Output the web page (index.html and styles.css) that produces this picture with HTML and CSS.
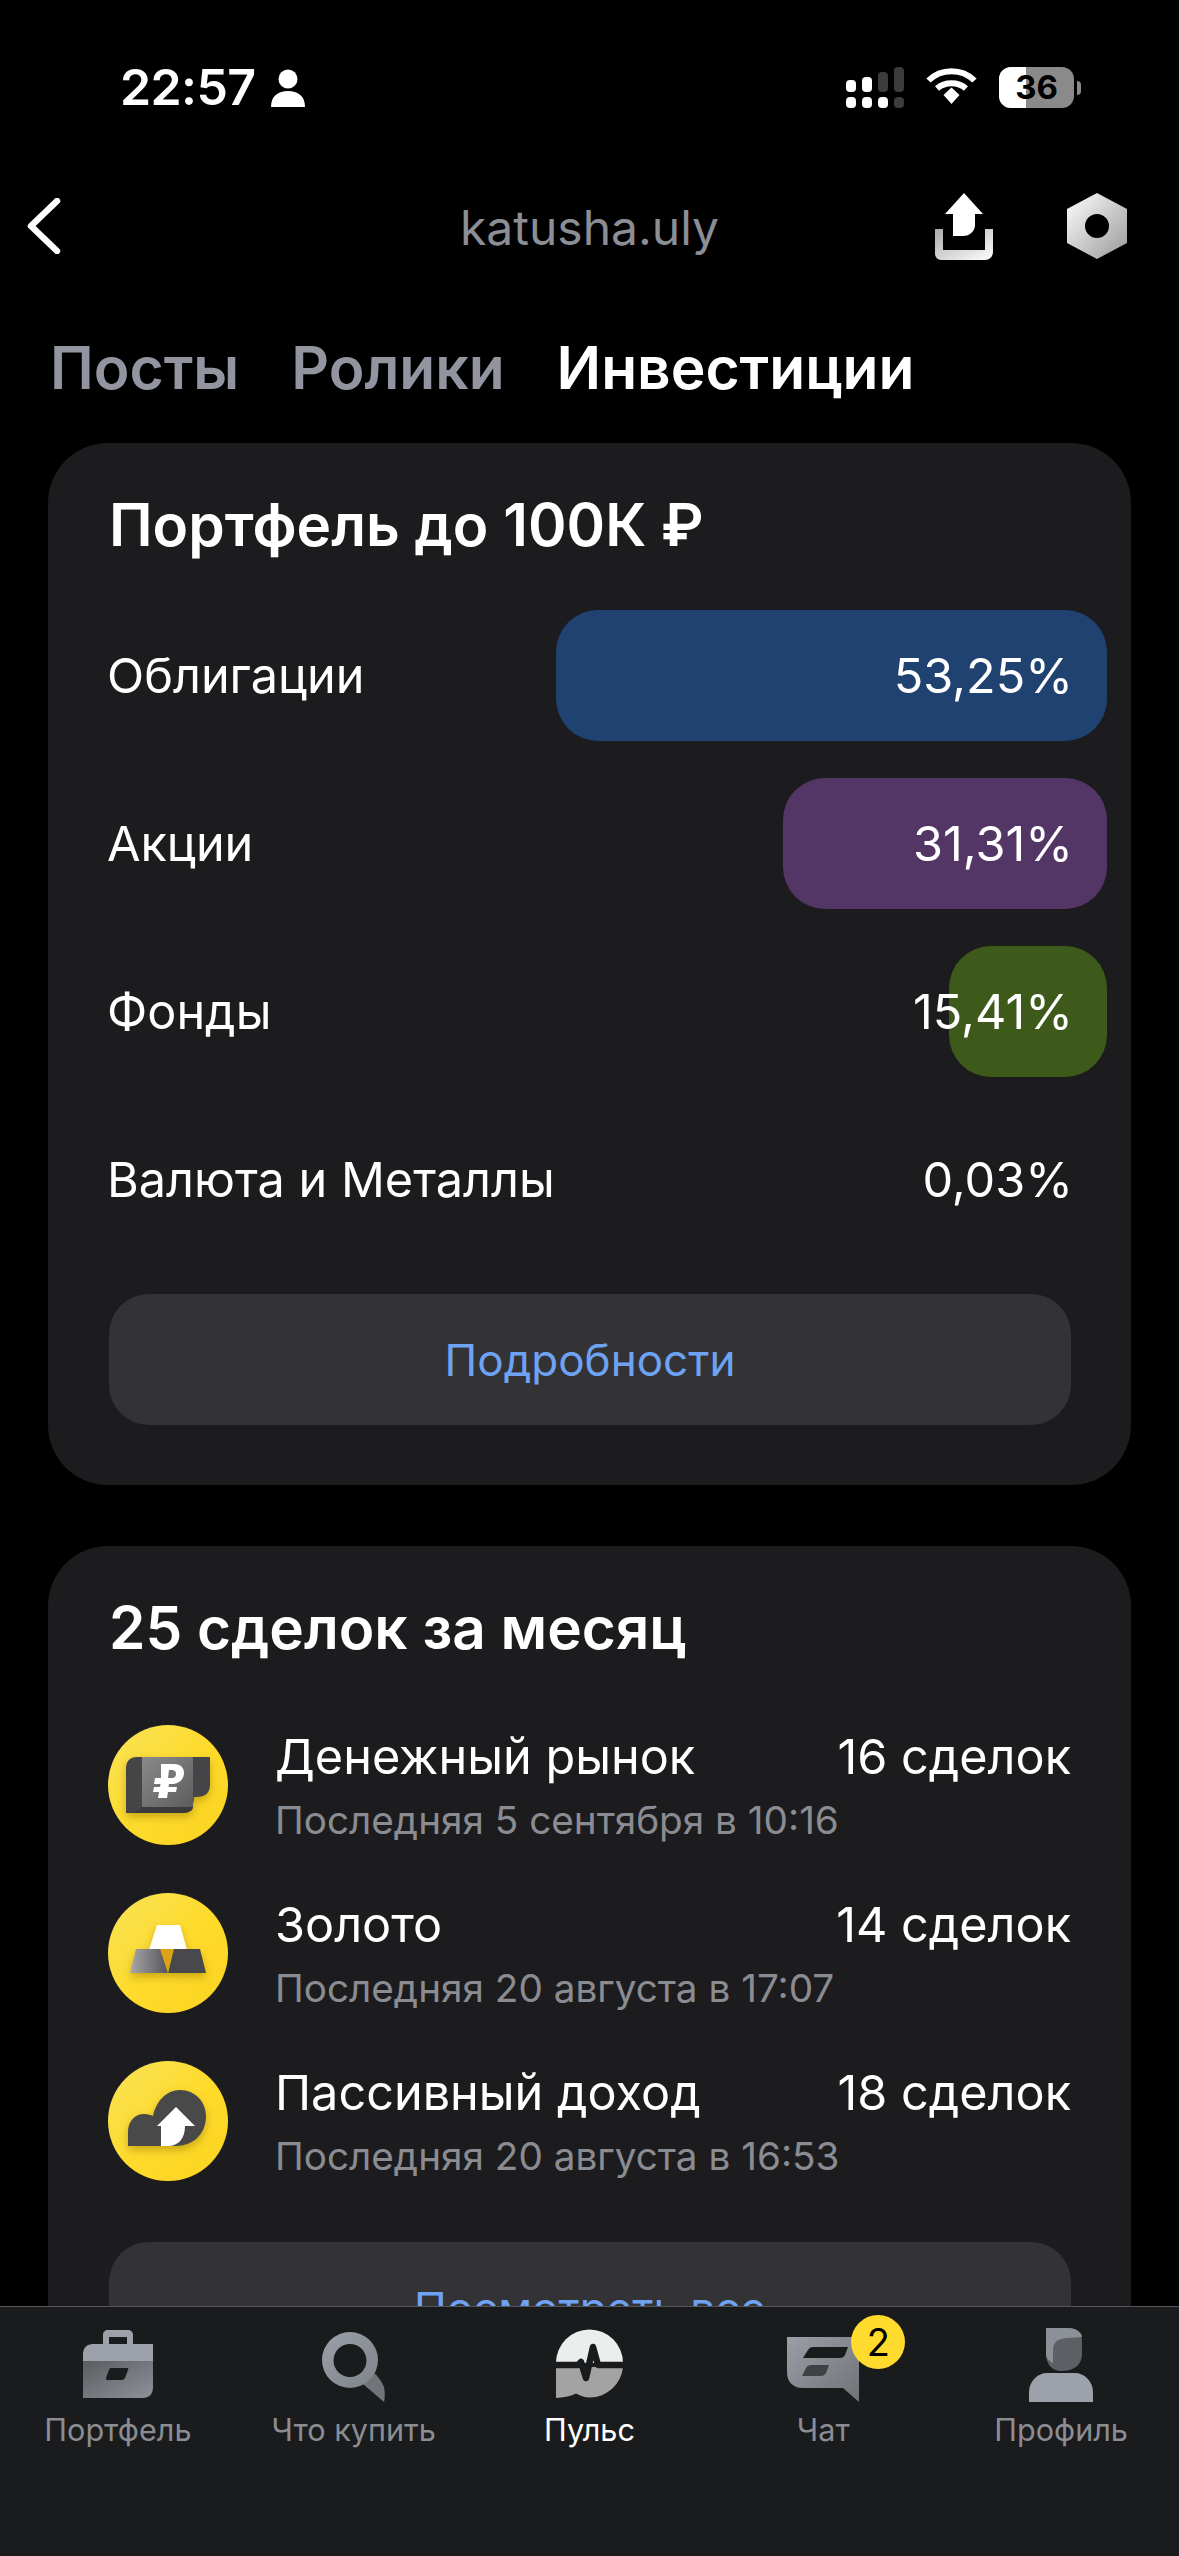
FILE: index.html
```html
<!DOCTYPE html>
<html lang="ru">
<head>
<meta charset="utf-8">
<title>katusha.uly</title>
<link rel="stylesheet" href="styles.css">
</head>
<body>
<div class="screen">
  <svg width="0" height="0" class="defs">
    <defs>
      <linearGradient id="yel" x1="0" y1="0" x2="1" y2="1"><stop offset="0" stop-color="#f8e25a"/><stop offset=".5" stop-color="#fedb2c"/><stop offset="1" stop-color="#fbd320"/></linearGradient>
      <linearGradient id="inner" x1="0" y1="0" x2="1" y2="1"><stop offset="0" stop-color="#8a8a8a"/><stop offset="1" stop-color="#5d5d5f"/></linearGradient>
      <linearGradient id="silver" x1="0" y1="0" x2="1" y2="0"><stop offset="0" stop-color="#a8a8a8"/><stop offset="1" stop-color="#55555a"/></linearGradient>
      <linearGradient id="tray" x1="0" y1="0" x2="1" y2="1"><stop offset="0" stop-color="#aaa"/><stop offset="1" stop-color="#fff"/></linearGradient>
      <linearGradient id="hexg" x1="0" y1="0" x2="1" y2="1"><stop offset="0" stop-color="#fff"/><stop offset="1" stop-color="#999"/></linearGradient>
      <linearGradient id="caseb" x1="0" y1="0" x2="1" y2="1"><stop offset="0" stop-color="#5a5c61"/><stop offset="1" stop-color="#8e9299"/></linearGradient>
      <linearGradient id="lupa" x1="0" y1="0" x2="1" y2="1"><stop offset="0" stop-color="#9ca1aa"/><stop offset="1" stop-color="#7e8288"/></linearGradient>
      <linearGradient id="chatg" x1="0" y1="0" x2="1" y2="1"><stop offset="0" stop-color="#9a9ea6"/><stop offset="1" stop-color="#6f7277"/></linearGradient>
      <filter id="soft" x="-20%" y="-20%" width="140%" height="150%"><feDropShadow dx="0" dy="4" stdDeviation="4" flood-color="#8a6a00" flood-opacity=".45"/></filter>
    </defs>
  </svg>

  <header class="status">
    <div class="status-left">
      <span class="clock">22:57</span>
      <svg class="person" width="34" height="38" viewBox="0 0 34 38"><circle cx="17" cy="10" r="9.500" fill="#fff"/><path d="M0 38c0-11 7-16 17-16s17 5 17 16z" fill="#fff"/></svg>
    </div>
    <div class="status-right">
      <svg width="58" height="41" viewBox="0 0 58 41" fill="#fff">
        <rect x="0" y="13" width="10" height="12" rx="4"/><rect x="16" y="10" width="10" height="15" rx="4"/>
        <rect x="32" y="5" width="10" height="20" rx="4" fill="#3c3c3c"/><rect x="48" y="0" width="10" height="25" rx="4" fill="#3c3c3c"/>
        <rect x="0" y="30" width="10" height="11" rx="4"/><rect x="16" y="30" width="10" height="11" rx="4"/>
        <rect x="32" y="30" width="10" height="11" rx="4"/><rect x="48" y="30" width="10" height="11" rx="4" fill="#3c3c3c"/>
      </svg>
      <svg width="51" height="37" viewBox="0 0 51 37" fill="none" stroke="#fff">
        <path d="M2.500 13.500C15 1 36 1 48.500 13.500" stroke-width="6"/>
        <path d="M11 21.500C19 14.500 32 14.500 40 21.500" stroke-width="6"/>
        <path d="M17.500 28 25.500 20.500 33.500 28 25.500 37z" fill="#fff" stroke="none"/>
      </svg>
      <div class="battery">
        <div class="battery-body"><div class="battery-fill"></div><span class="battery-num">36</span></div>
        <div class="battery-tip"></div>
      </div>
    </div>
  </header>

  <nav class="nav">
    <svg class="back" width="34" height="56" viewBox="0 0 34 56" fill="none"><path d="M30 3 4 28l26 25" stroke="#fff" stroke-width="6.500" stroke-linecap="round" stroke-linejoin="round"/></svg>
    <span class="user">katusha.uly</span>
    <div class="nav-actions">
      <svg width="62" height="67" viewBox="0 0 62 67">
        <path d="M2 36h8v21h42V36h8v23a8 8 0 0 1-8 8H8a6 6 0 0 1-6-6z" fill="url(#tray)"/>
        <path d="M31 0 50 21H42v11c0 6-5 11-12 11H20V21H12z" fill="#fff"/>
      </svg>
      <svg width="60" height="66" viewBox="0 0 60 66"><path fill-rule="evenodd" d="M30 0 60 16v34L30 66 0 50V16zM30 21a12 12 0 1 0 0 24 12 12 0 0 0 0-24z" fill="url(#hexg)"/></svg>
    </div>
  </nav>

  <div class="tabs">
    <span class="tab">Посты</span>
    <span class="tab">Ролики</span>
    <span class="tab active">Инвестиции</span>
  </div>

  <main class="content">
    <section class="card portfolio">
      <h2 class="card-title">Портфель до 100К ₽</h2>
      <div class="alloc-list">
        <div class="alloc"><span class="alloc-name">Облигации</span><div class="alloc-bar blue"></div><span class="alloc-val">53,25%</span></div>
        <div class="alloc"><span class="alloc-name">Акции</span><div class="alloc-bar purple"></div><span class="alloc-val">31,31%</span></div>
        <div class="alloc"><span class="alloc-name">Фонды</span><div class="alloc-bar green"></div><span class="alloc-val">15,41%</span></div>
        <div class="alloc"><span class="alloc-name">Валюта и Металлы</span><span class="alloc-val">0,03%</span></div>
      </div>
      <div class="btn">Подробности</div>
    </section>

    <section class="card deals">
      <h2 class="card-title">25 сделок за месяц</h2>
      <div class="deal-list">
        <div class="deal">
          <svg class="deal-ic" width="120" height="120" viewBox="0 0 120 120">
            <circle cx="60" cy="60" r="60" fill="url(#yel)"/>
            <g filter="url(#soft)">
              <path d="M29 32h73v28c0 8-5 12-13 12h-3c0 9-4 16-14 16H18V44c0-8 4-12 11-12z" fill="#454547"/>
              <path d="M34 32h51v50H34z" fill="url(#inner)"/>
              <path d="M34 82h51c0 4-5 6-10 6H18c6 0 14-2 16-6z" fill="#3a3a3c"/>
            </g>
            <path d="M53 39H66C73 39 76 43 76 48C76 54 71 59 64 59H61L60.500 62H69L68 67H60L59 73H50L51 67H45L46 62H52L52.500 59H46L47 53H53zM61 45 60 53H64C67 53 68 51 68 49C68 46 66 45 64 45z" fill="#fff" fill-rule="evenodd"/>
          </svg>
          <div class="deal-body">
            <div class="deal-top"><span class="deal-name">Денежный рынок</span><span class="deal-count">16 сделок</span></div>
            <div class="deal-sub">Последняя 5 сентября в 10:16</div>
          </div>
        </div>
        <div class="deal">
          <svg class="deal-ic" width="120" height="120" viewBox="0 0 120 120">
            <circle cx="60" cy="60" r="60" fill="url(#yel)"/>
            <g filter="url(#soft)">
              <path d="M49 32h23l7 25H41z" fill="#fff"/>
              <path d="M28 56h25l7 24H22z" fill="url(#silver)"/>
              <path d="M65 56h27l6 24H60z" fill="#4a4a4c"/>
              <path d="M52 56h14l-6 24z" fill="#dca314"/>
            </g>
          </svg>
          <div class="deal-body">
            <div class="deal-top"><span class="deal-name">Золото</span><span class="deal-count">14 сделок</span></div>
            <div class="deal-sub">Последняя 20 августа в 17:07</div>
          </div>
        </div>
        <div class="deal">
          <svg class="deal-ic" width="120" height="120" viewBox="0 0 120 120">
            <circle cx="60" cy="60" r="60" fill="url(#yel)"/>
            <g filter="url(#soft)">
              <path d="M20 85V71c0-11 7-18 16-18 4 0 7 1 9 2 3-14 13-26 27-26 15 0 26 12 26 26 0 19-14 30-30 30z" fill="#48484a"/>
            </g>
            <path d="M68 46 87 65H77c0 12-6 20-17 20h-7V65H49z" fill="#fff"/>
          </svg>
          <div class="deal-body">
            <div class="deal-top"><span class="deal-name">Пассивный доход</span><span class="deal-count">18 сделок</span></div>
            <div class="deal-sub">Последняя 20 августа в 16:53</div>
          </div>
        </div>
      </div>
      <div class="btn">Посмотреть все</div>
    </section>
  </main>

  <footer class="tabbar">
    <div class="tb-item">
      <svg class="tb-ic" width="72" height="76" viewBox="0 0 72 76">
        <path d="M21 18v-9c0-3 2-5 5-5h20c3 0 5 2 5 5v9h-6v-7H27v7z" fill="#9ca1aa"/>
        <path d="M11 18h60v17H1v-7C1 22 5 18 11 18z" fill="#9ca1aa"/>
        <path d="M1 35h70v26c0 7-4 11-10 11H1z" fill="url(#caseb)"/>
        <path d="M29 42h16c1 0 2 1 1 2l-3 8c-1 1-2 2-3 2H25c-1 0-1-1-1-2l3-8c0-1 1-2 2-2z" fill="#1a1b1d"/>
      </svg>
      <span>Портфель</span>
    </div>
    <div class="tb-item">
      <svg class="tb-ic" width="66" height="76" viewBox="0 0 66 76">
        <path d="M42 58 52 46c5 4 9 10 11 15 1 5 1 11 0 15z" fill="#717478"/>
        <path fill-rule="evenodd" d="M29 6a28 28 0 1 0 0 56 28 28 0 0 0 0-56zm0 12a16.500 16.500 0 1 1 0 33 16.500 16.500 0 0 1 0-33z" fill="url(#lupa)"/>
      </svg>
      <span>Что купить</span>
    </div>
    <div class="tb-item on">
      <svg class="tb-ic" width="70" height="76" viewBox="0 0 70 76">
        <path d="M2 37A33.500 33.500 0 0 1 69 37z" fill="#eceded"/>
        <path d="M2 41H69A33.500 33.500 0 0 1 36 71.500c-6 0-10-2-14-4-6 3-13 4-20 4.500z" fill="#a3a3a3"/>
        <path d="M0 39H24L27 36 32 52 39 21 44 39H72" fill="none" stroke="#1a1b1d" stroke-width="6.500" stroke-linejoin="round"/>
      </svg>
      <span>Пульс</span>
    </div>
    <div class="tb-item chat-item">
      <div class="chat-wrap">
        <svg class="tb-ic" width="72" height="76" viewBox="0 0 72 76">
          <path d="M0 11h72v65L56 62H16C6 62 0 56 0 46z" fill="url(#chatg)"/>
          <path d="M21 24c1-2 3-3 5-3h35l-3 8c-1 2-3 3-5 3H16z" fill="#1a1b1d"/>
          <path d="M19 42c1-2 3-3 5-3h18l-3 8c-1 2-3 3-5 3H15z" fill="#3f4145"/>
        </svg>
        <span class="badge">2</span>
      </div>
      <span>Чат</span>
    </div>
    <div class="tb-item">
      <svg class="tb-ic" width="64" height="76" viewBox="0 0 64 76">
        <path d="M17 2h22c10 0 14 6 14 14v12c0 11-8 17-21 17-8 0-15-6-15-17z" fill="#5c5f64"/>
        <path d="M17 2h22c10 0 14 6 14 9-7 1-14 0-21 2-6 2-8 6-8 11v13c-4-2-7-5-7-9z" fill="#8c9097"/>
        <path d="M0 76V66c0-11 9-19 18-19h28c9 0 18 8 18 19v10z" fill="#9ca1aa"/>
      </svg>
      <span>Профиль</span>
    </div>
  </footer>
</div>
</body>
</html>
```
FILE: styles.css
```css
* { box-sizing: border-box; margin: 0; padding: 0; }
html, body { background: #000; }
body { font-family: "Inter", "Liberation Sans", sans-serif; color: #fff; }
.defs { position: absolute; }
.screen { width: 1179px; height: 2556px; overflow: hidden; position: relative; background: #000; }

.status { height: 174px; display: flex; justify-content: space-between; padding: 67px 98px 0 120px; }
.status-left { display: flex; align-items: flex-start; gap: 15px; }
.clock { font-size: 50px; line-height: 40px; font-weight: 600; letter-spacing: -0.6px; }
.person { margin-top: 2px; }
.status-right { display: flex; align-items: flex-start; gap: 22px; }
.status-right svg { flex: none; }
.battery { display: flex; align-items: center; gap: 3px; }
.battery-body { width: 75px; height: 41px; border-radius: 12px; background: #8a8a8a; overflow: hidden; position: relative; display: flex; align-items: center; justify-content: center; }
.battery-fill { position: absolute; left: 0; top: 0; bottom: 0; width: 27px; background: #fff; }
.battery-num { position: relative; color: #000; font-size: 33px; font-weight: 700; line-height: 41px; }
.battery-tip { width: 4px; height: 14px; background: #8a8a8a; border-radius: 0 7px 7px 0; }

.nav { height: 104px; display: flex; align-items: center; padding: 0 52px 0 27px; position: relative; }
.user { position: absolute; left: 0; right: 0; top: 26px; text-align: center; font-size: 48px; color: #8c8e96; line-height: 56px; }
.nav-actions { margin-left: auto; display: flex; align-items: center; gap: 72px; }

.tabs { display: flex; gap: 52px; padding-left: 50px; height: 75px; margin-top: 52px; margin-bottom: 1px; align-items: center; font-size: 58.700px; font-weight: 600; color: #92959f; line-height: 70px; }
.tab.active { color: #fff; }

.content { padding: 37px 48px 0; display: flex; flex-direction: column; gap: 61px; }
.card { background: #1c1c1e; border-radius: 60px; padding: 48px 24px 60px 61px; }
.portfolio { height: 1042px; }
.card-title { font-size: 58.500px; font-weight: 600; line-height: 68px; }

.alloc-list { margin-top: 51px; display: flex; flex-direction: column; gap: 37px; }
.alloc { height: 131px; position: relative; display: flex; align-items: center; justify-content: space-between; padding-right: 34px; font-size: 48.600px; }
.alloc-name { position: relative; margin-left: -2px; }
.alloc-val { position: relative; }
.alloc-bar { position: absolute; right: 0; top: 0; bottom: 0; border-radius: 42px; }
.blue { width: 551px; background: #1f4270; }
.purple { width: 324px; background: #543666; }
.green { width: 158px; background: #3d5a1a; }

.btn { height: 131px; margin: 49px 36px 0 0; background: #333336; border-radius: 40px; display: flex; align-items: center; justify-content: center; color: #6ea2f2; font-size: 44px; }
.deal-list { margin-top: 63px; display: flex; flex-direction: column; gap: 48px; padding-right: 36px; }
.deal { display: flex; align-items: center; gap: 47px; height: 120px; margin-left: -1px; }
.deal-ic { flex: none; display: block; }
.deal-body { flex: 1; }
.deal-top { display: flex; justify-content: space-between; font-size: 48.600px; line-height: 60px; }
.deal-sub { color: #8a8c92; font-size: 38.700px; line-height: 48px; margin-top: 9px; }
.deals .btn { margin-top: 61px; }

.tabbar { position: absolute; left: 0; right: 0; bottom: 0; height: 250px; background: #1a1b1d; border-top: 1px solid #55565a; display: grid; grid-template-columns: repeat(5, 1fr); padding-top: 19px; }
.tb-item { display: flex; flex-direction: column; align-items: center; font-size: 30.600px; color: #8b8d92; line-height: 40px; gap: 8px; }
.tb-item.on { color: #fff; }
.chat-item { padding-right: 4px; }
.tb-ic { display: block; }
.chat-wrap { position: relative; }
.badge { position: absolute; left: 64px; top: -11px; width: 54px; height: 54px; border-radius: 50%; background: #fedb2c; color: #000; font-size: 38px; line-height: 54px; text-align: center; }
```
